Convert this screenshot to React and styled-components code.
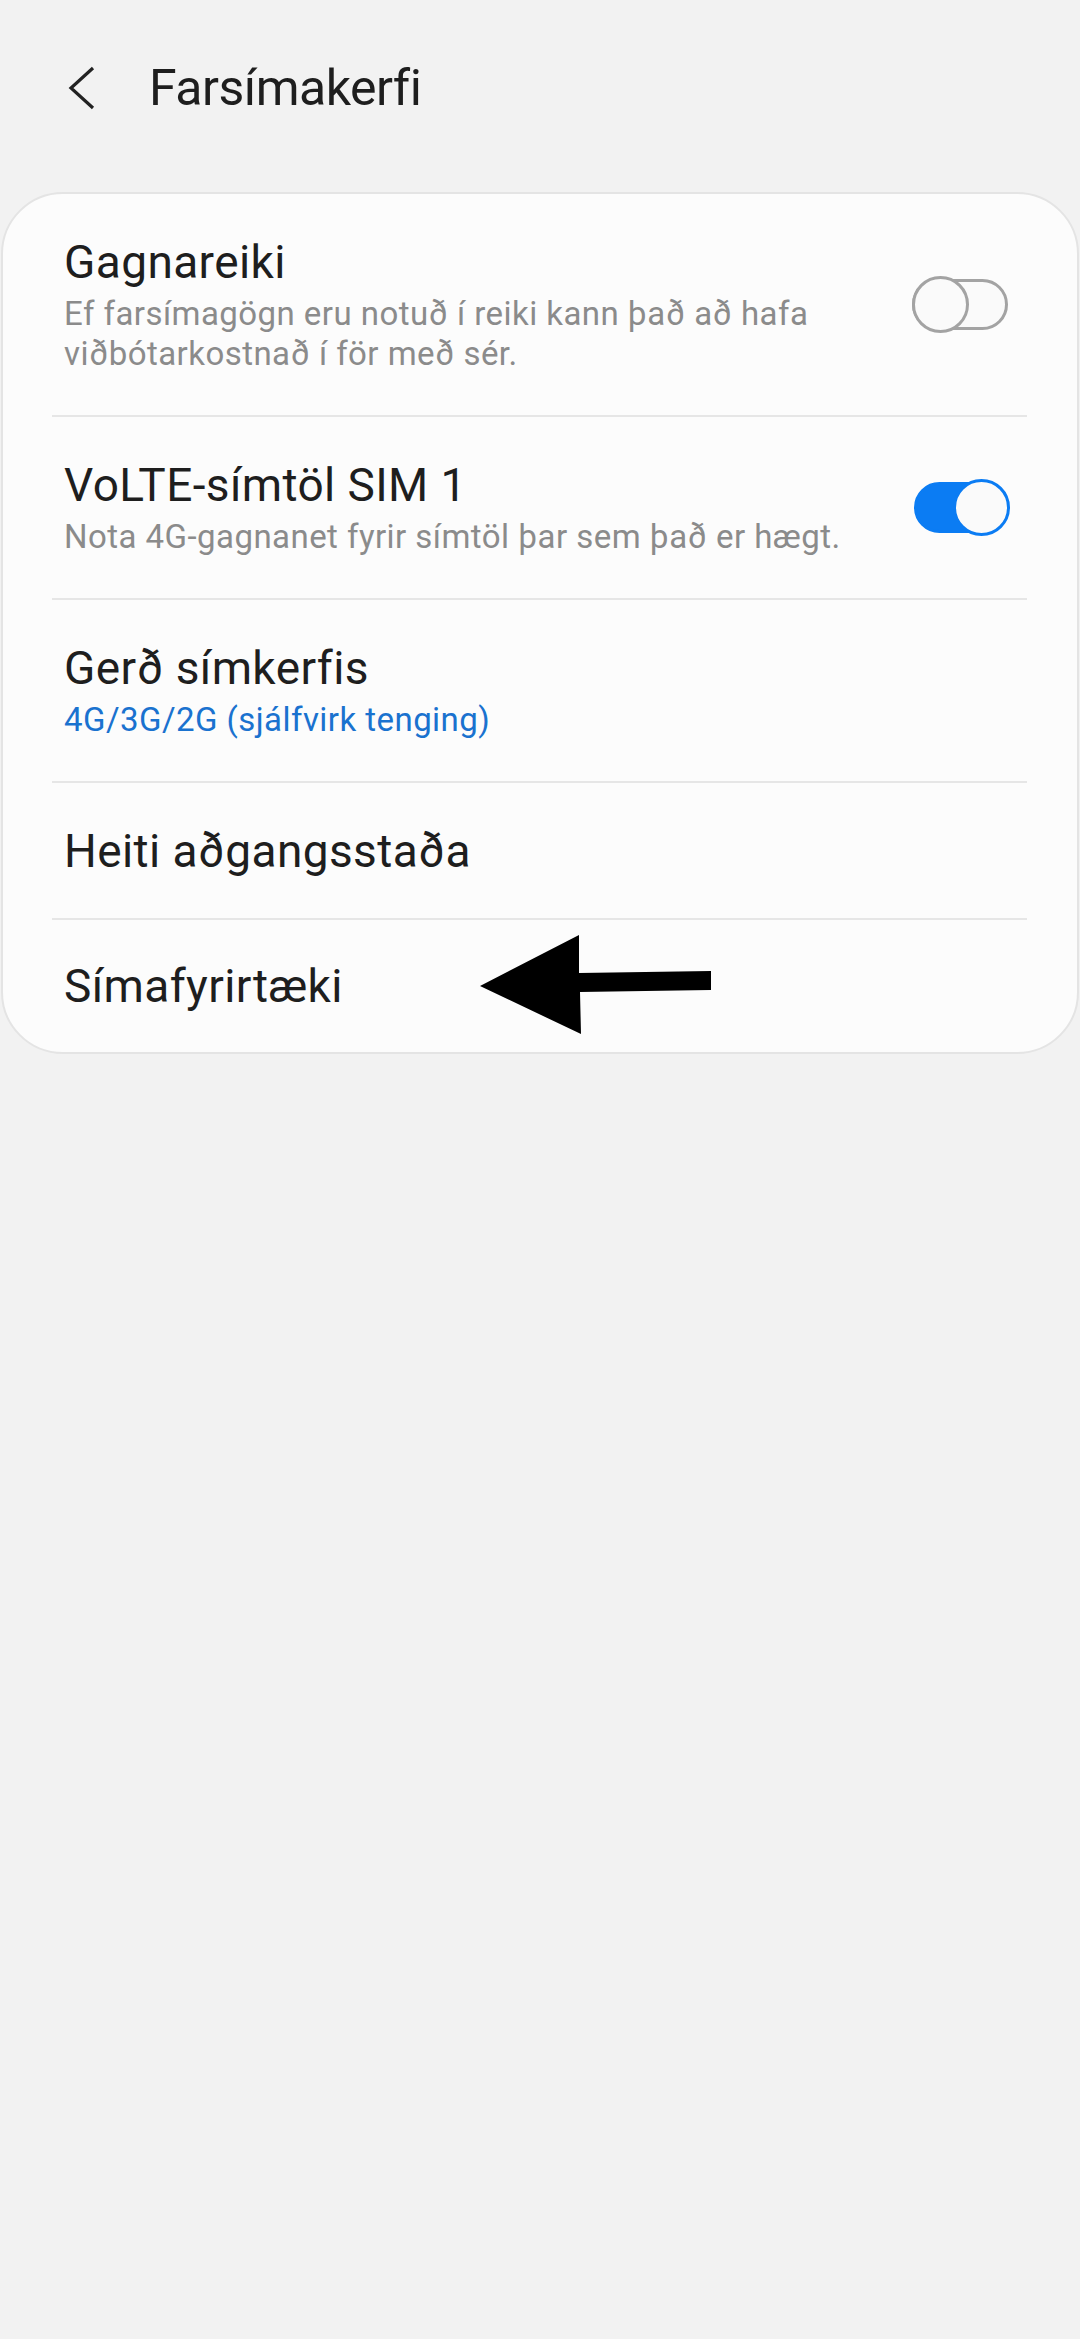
import React from "react";
import styled, { createGlobalStyle } from "styled-components";

const GlobalStyle = createGlobalStyle`
  html, body {
    margin: 0;
    padding: 0;
    background: #f2f2f2;
    font-family: Roboto, "Noto Sans", "Liberation Sans", sans-serif;
  }
  * { box-sizing: border-box; }
`;

const Page = styled.div`
  width: 1080px;
  min-height: 2339px;
  background: #f2f2f2;
`;

const Header = styled.div`
  height: 176px;
  display: flex;
  align-items: center;
  padding-left: 68px;
`;

const BackButton = styled.div`
  width: 30px;
  height: 44px;
  display: flex;
  align-items: center;
  margin-right: 51px;
`;

const Title = styled.h1`
  margin: 0;
  font-size: 50px;
  line-height: 1;
  font-weight: 400;
  color: #1e1e1e;
  letter-spacing: -0.5px;
`;

const Card = styled.div`
  margin: 16px 1px 0;
  background: #fcfcfc;
  border: 2px solid #e4e4e4;
  border-radius: 62px;
  overflow: hidden;
`;

const Row = styled.div`
  position: relative;
  display: flex;
  align-items: center;
  min-height: ${(p) => p.$height}px;
  padding: 0 67px 0 61px;
`;

const TextBlock = styled.div`
  flex: 1;
  padding-right: 30px;
  display: flex;
  flex-direction: column;
  gap: 5px;
`;

const ItemTitle = styled.div`
  font-size: 46px;
  line-height: 54px;
  color: #1e1e1e;
  letter-spacing: 0.4px;
`;

const ItemSub = styled.div`
  font-size: 33px;
  line-height: 40px;
  color: ${(p) => (p.$accent ? "#1a72cf" : "#8b8b8b")};
  letter-spacing: 0.45px;
`;

const Divider = styled.div`
  height: 2px;
  background: #e6e6e6;
  margin: 0 50px 0 49px;
`;

const Toggle = styled.div`
  position: relative;
  width: 98px;
  height: 57px;
  flex-shrink: 0;
`;

const Track = styled.div`
  position: absolute;
  left: ${(p) => (p.$on ? 2 : 0)}px;
  right: ${(p) => (p.$on ? 5 : 2)}px;
  top: 3px;
  height: 51px;
  border-radius: 26px;
  background: ${(p) => (p.$on ? "#0b7cf3" : "#fafafa")};
  border: 3px solid ${(p) => (p.$on ? "#0b7cf3" : "#a3a3a3")};
`;

const Thumb = styled.div`
  position: absolute;
  top: 0;
  ${(p) => (p.$on ? "right: 0;" : "left: 0;")}
  width: 57px;
  height: 57px;
  border-radius: 50%;
  background: #fafafa;
  border: 3px solid ${(p) => (p.$on ? "#0b7cf3" : "#a3a3a3")};
`;

const Arrow = styled.svg`
  position: absolute;
  left: 477px;
  top: 15px;
`;

function Switch({ on }) {
  return (
    <Toggle>
      <Track $on={on} />
      <Thumb $on={on} />
    </Toggle>
  );
}

export default function App() {
  return (
    <Page>
      <GlobalStyle />
      <Header>
        <BackButton>
          <svg width="30" height="44" viewBox="0 0 30 44">
            <polyline
              points="25,2 3,22 25,42"
              fill="none"
              stroke="#222"
              strokeWidth="3.2"
              strokeLinejoin="miter"
            />
          </svg>
        </BackButton>
        <Title>Farsímakerfi</Title>
      </Header>

      <Card>
        <Row $height={221}>
          <TextBlock>
            <ItemTitle>Gagnareiki</ItemTitle>
            <ItemSub>
              Ef farsímagögn eru notuð í reiki kann það að hafa viðbótarkostnað í för með sér.
            </ItemSub>
          </TextBlock>
          <Switch on={false} />
        </Row>
        <Divider />
        <Row $height={181}>
          <TextBlock>
            <ItemTitle>VoLTE-símtöl SIM 1</ItemTitle>
            <ItemSub>Nota 4G-gagnanet fyrir símtöl þar sem það er hægt.</ItemSub>
          </TextBlock>
          <Switch on />
        </Row>
        <Divider />
        <Row $height={181}>
          <TextBlock>
            <ItemTitle>Gerð símkerfis</ItemTitle>
            <ItemSub $accent>4G/3G/2G (sjálfvirk tenging)</ItemSub>
          </TextBlock>
        </Row>
        <Divider />
        <Row $height={135}>
          <TextBlock>
            <ItemTitle>Heiti aðgangsstaða</ItemTitle>
          </TextBlock>
        </Row>
        <Divider />
        <Row $height={132}>
          <TextBlock>
            <ItemTitle>Símafyrirtæki</ItemTitle>
          </TextBlock>
          <Arrow width="232" height="100" viewBox="0 0 232 100">
            <polygon
              points="0,51 99,0 99,38 231,36 231,55 100,57 101,99"
              fill="#000"
            />
          </Arrow>
        </Row>
      </Card>
    </Page>
  );
}
